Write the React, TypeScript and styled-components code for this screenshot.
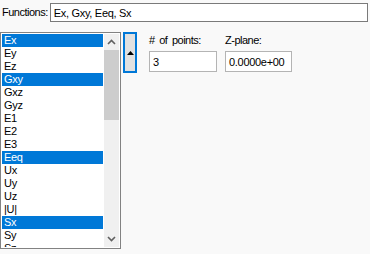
import React from 'react';
import styled, { createGlobalStyle } from 'styled-components';

const Global = createGlobalStyle`
    body {
        margin: 0;
        background: #f9f9f9;
        font-family: "Liberation Sans", Arial, sans-serif;
        font-size: 11px;
        color: #000;
    }
`;

const Page = styled.div`
    width: 370px;
    height: 254px;
    display: flex;
    flex-direction: column;
    gap: 10px;
    padding-top: 3px;
    box-sizing: border-box;
`;

const TopRow = styled.div`
    display: flex;
    align-items: center;
    padding-left: 2px;
    gap: 2px;
`;

const Label = styled.span`
    letter-spacing: -0.5px;
    word-spacing: 2px;
    line-height: 13px;
    white-space: nowrap;
`;

const TextBox = styled.div<{ $w: number; $h: number; $border: string }>`
    width: ${p => p.$w}px;
    height: ${p => p.$h}px;
    box-sizing: border-box;
    background: #fff;
    border: 1px solid ${p => p.$border};
    padding-left: 3px;
    display: flex;
    align-items: center;
    letter-spacing: -0.3px;
    white-space: nowrap;
`;

const MainRow = styled.div`
    display: flex;
    align-items: flex-start;
`;

const ListBox = styled.div`
    width: 121px;
    height: 217px;
    box-sizing: border-box;
    border: 1px solid #828282;
    background: #fff;
    display: flex;
    padding: 1px 1px 1px 1px;
`;

const Items = styled.div`
    flex: 1;
    overflow: hidden;
    display: flex;
    flex-direction: column;
`;

const Item = styled.div<{ $sel?: boolean }>`
    height: 13px;
    line-height: 13px;
    flex-shrink: 0;
    padding-left: 2px;
    margin-right: 1px;
    letter-spacing: -0.3px;
    background: ${p => (p.$sel ? '#0078d7' : 'transparent')};
    color: ${p => (p.$sel ? '#fff' : '#000')};
`;

const ScrollBar = styled.div`
    width: 15px;
    background: #f0f0f0;
    display: flex;
    flex-direction: column;
`;

const ScrollArrow = styled.div`
    height: 16px;
    display: flex;
    align-items: center;
    justify-content: center;
`;

const Track = styled.div`
    flex: 1;
    display: flex;
    flex-direction: column;
`;

const Thumb = styled.div`
    height: 70px;
    background: #cdcdcd;
    margin: 0 0;
`;

const MoveButton = styled.div`
    margin-left: 2px;
    width: 14px;
    height: 41px;
    box-sizing: border-box;
    border: 2px solid #0078d7;
    background: #e1e1e1;
    display: flex;
    align-items: center;
    justify-content: center;
`;

const Field = styled.div`
    display: flex;
    flex-direction: column;
    gap: 4px;
    padding-top: 2px;
`;

const Fields = styled.div`
    display: flex;
    gap: 8px;
    margin-left: 12px;
`;

const Chevron = ({ up }: { up?: boolean }) => (
    <svg width="9" height="6" viewBox="0 0 9 6">
        <path
            d={up ? 'M1 5 L4.5 1.5 L8 5' : 'M1 1 L4.5 4.5 L8 1'}
            fill="none"
            stroke="#606060"
            strokeWidth="1.6"
        />
    </svg>
);

const items: [string, boolean][] = [
    ['Ex', true], ['Ey', false], ['Ez', false], ['Gxy', true], ['Gxz', false],
    ['Gyz', false], ['E1', false], ['E2', false], ['E3', false], ['Eeq', true],
    ['Ux', false], ['Uy', false], ['Uz', false], ['|U|', false], ['Sx', true],
    ['Sy', false], ['Sz', false],
];

export default function App() {
    return (
        <Page>
            <Global />
            <TopRow>
                <Label>Functions:</Label>
                <TextBox $w={318} $h={19} $border="#7a7a7a">Ex, Gxy, Eeq, Sx</TextBox>
            </TopRow>
            <MainRow>
                <ListBox>
                    <Items>
                        {items.map(([name, sel]) => (
                            <Item key={name} $sel={sel}>{name}</Item>
                        ))}
                    </Items>
                    <ScrollBar>
                        <ScrollArrow><Chevron up /></ScrollArrow>
                        <Track><Thumb /></Track>
                        <ScrollArrow><Chevron /></ScrollArrow>
                    </ScrollBar>
                </ListBox>
                <MoveButton>
                    <svg width="7" height="4" viewBox="0 0 7 4">
                        <path d="M0 4 L3.5 0 L7 4 Z" fill="#000" />
                    </svg>
                </MoveButton>
                <Fields>
                    <Field>
                        <Label>&#35; of points:</Label>
                        <TextBox $w={68} $h={21} $border="#b4b4b4">3</TextBox>
                    </Field>
                    <Field>
                        <Label>Z-plane:</Label>
                        <TextBox $w={67} $h={21} $border="#b4b4b4">0.0000e+00</TextBox>
                    </Field>
                </Fields>
            </MainRow>
        </Page>
    );
}
